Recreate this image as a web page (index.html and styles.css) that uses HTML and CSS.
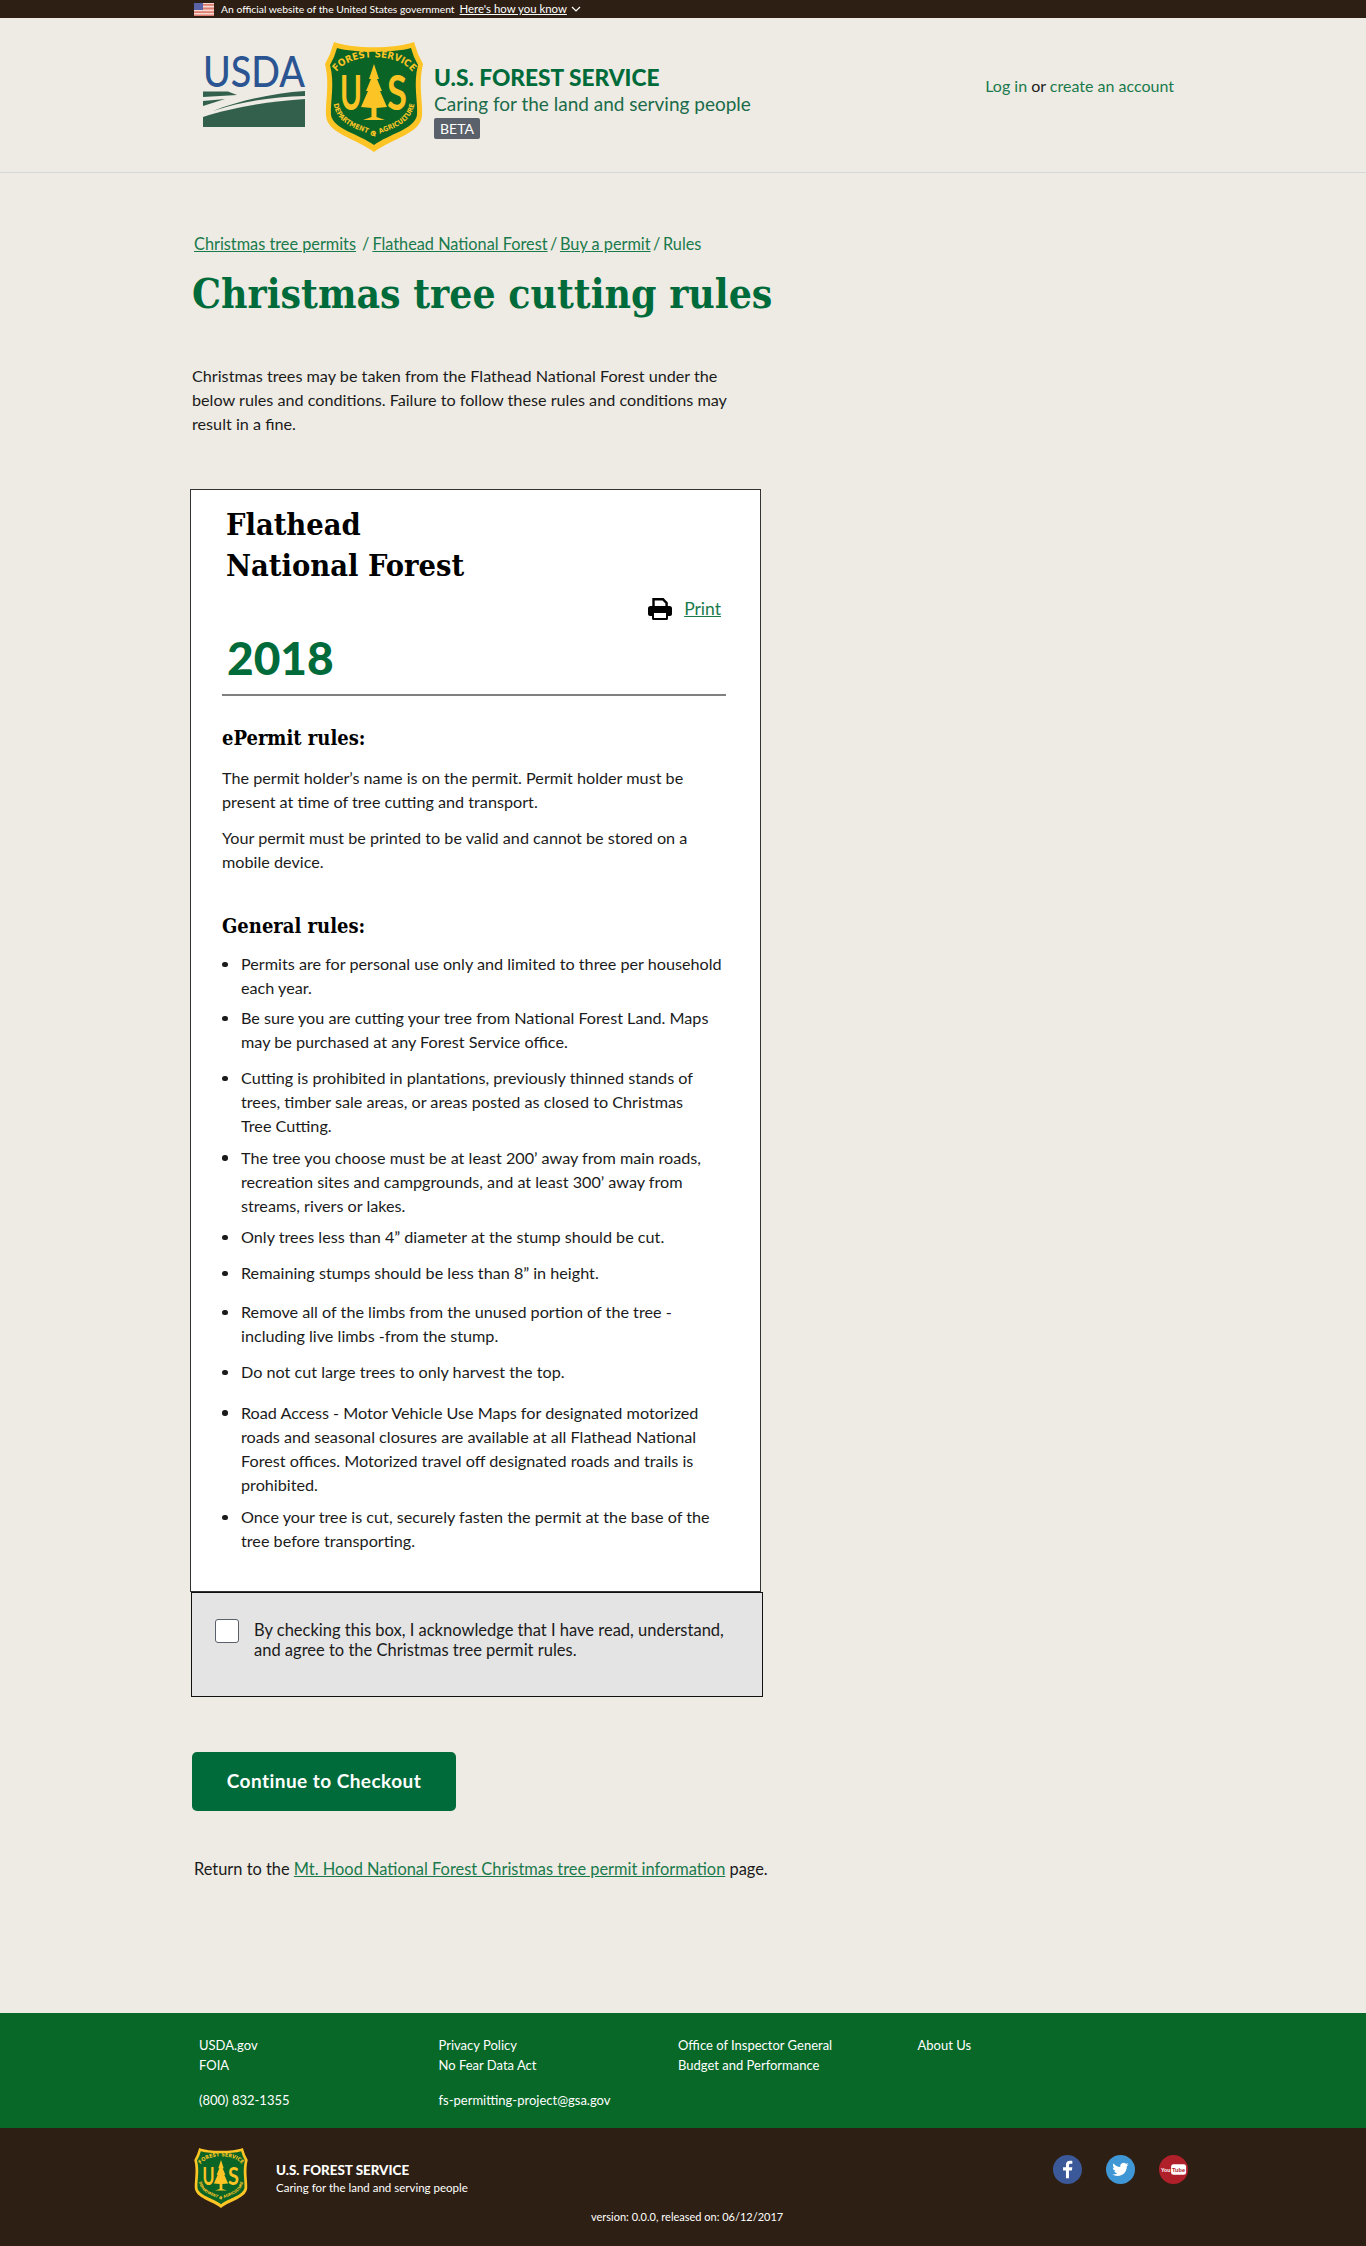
FILE: index.html
```html
<!DOCTYPE html>
<html lang="en">
<head>
    <meta charset="UTF-8">
    <meta name="viewport" content="width=device-width, initial-scale=1.0">
    <title>Christmas tree cutting rules - U.S. Forest Service</title>
    <link rel="stylesheet" href="styles.css">
</head>
<body>

    <svg class="defs" width="0" height="0" aria-hidden="true">
        <defs>
            <symbol id="shield" viewBox="0 0 98 110">
                <path d="M9 0 C28 7 70 7 89 0 L93 12 L98 22 C93 42 98 60 97 74 C95 92 68 96 49 110 C30 96 3 92 1 74 C0 60 5 42 0 22 L5 12 Z" fill="#fdc425"/>
                <path d="M12 6 C30 11 68 11 86 6 L89 15 L93 23 C88 42 93 60 92 73 C90 87 64 92 49 103 C34 92 8 87 6 73 C5 60 10 42 5 23 L9 15 Z" fill="#0a6426"/>
                <path id="arc-top" d="M11 31 C24 10 74 10 88 31" fill="none"/>
                <path id="arc-bottom" d="M8 56 C9 86 36 86 49 95 C62 86 89 86 90 56" fill="none"/>
                <text class="shield-small" fill="#fdc425"><textPath href="#arc-top" startOffset="50%" text-anchor="middle">FOREST SERVICE</textPath></text>
                <text class="shield-tiny" fill="#fdc425"><textPath href="#arc-bottom" startOffset="50%" text-anchor="middle">DEPARTMENT OF AGRICULTURE</textPath></text>
                <text class="shield-big" x="15" y="68" textLength="22" lengthAdjust="spacingAndGlyphs" fill="#fdc425">U</text>
                <text class="shield-big" x="62" y="68" textLength="20" lengthAdjust="spacingAndGlyphs" fill="#fdc425">S</text>
                <path d="M49 22 L54 37 L52 37 L57 49 L55 49 L62 65 L51.500 66 L51.500 75 L60 78 L38 78 L46.500 75 L46.500 66 L36 65 L43 49 L41 49 L46 37 L44 37 Z" fill="#fdc425"/>
            </symbol>
        </defs>
    </svg>

    <div class="gov-banner">
        <svg class="flag" viewBox="0 0 20 13" width="20" height="13">
            <rect width="20" height="13" fill="#f7d9cf"/>
            <path d="M0 1h20v1.800H0zM0 4.600h20v1.800H0zM0 8.200h20V10H0zM0 11.600h20V13H0z" fill="#dd7d72"/>
            <rect width="9" height="7" fill="#5a62a8"/>
        </svg>
        <span class="gov-text">An official website of the United States government</span>
        <a class="gov-link" href="#">Here's how you know</a>
        <svg class="chevron" viewBox="0 0 10 6" width="10" height="6"><path d="M1 1l4 4 4-4" fill="none" stroke="#fff" stroke-width="1.200"/></svg>
    </div>

    <header class="site-header">
        <div class="brand">
            <svg class="usda-logo" viewBox="0 0 102 70" width="102" height="70">
                <text class="usda-text" x="0" y="30" textLength="102" lengthAdjust="spacingAndGlyphs" fill="#2b5592">USDA</text>
                <path d="M0 34.500H25L34 38L0 40z" fill="#33604c"/>
                <path d="M102 34V39C70 40 40 44 10 54C35 44 70 36 102 34z" fill="#33604c"/>
                <path d="M0 44L22 42L0 49z" fill="#33604c"/>
                <path d="M102 42V70H0V60C30 50 70 44 102 42z" fill="#33604c"/>
            </svg>
            <svg class="shield-logo" width="98" height="110"><use href="#shield"/></svg>
            <div class="brand-text">
                <div class="brand-title">U.S. FOREST SERVICE</div>
                <div class="brand-tagline">Caring for the land and serving people</div>
                <span class="beta">BETA</span>
            </div>
        </div>
        <div class="login"><a href="#">Log in</a> or <a href="#">create an account</a></div>
    </header>

    <main class="content">
        <nav class="breadcrumbs">
            <a href="#">Christmas tree permits</a><span class="sep first">/</span><a href="#">Flathead National Forest</a><span class="sep">/</span><a href="#">Buy a permit</a><span class="sep">/</span>Rules
        </nav>

        <h1>Christmas tree cutting rules</h1>

        <p class="intro">Christmas trees may be taken from the Flathead National Forest under the below rules and conditions. Failure to follow these rules and conditions may result in a fine.</p>

        <section class="rules-card">
            <h2 class="forest-name">Flathead<br>National Forest</h2>
            <div class="print-row">
                <svg class="print-icon" viewBox="0 0 24 22" width="24" height="22">
                    <path d="M5.500 10V1.300h9.500l3.600 3.600V10" fill="none" stroke="#000" stroke-width="2.400"/>
                    <path d="M2.500 8h19A2.500 2.500 0 0 1 24 10.500V16a2 2 0 0 1-2 2h-2v2.500a1.500 1.500 0 0 1-1.500 1.500h-13A1.500 1.500 0 0 1 4 20.500V18H2a2 2 0 0 1-2-2V10.500A2.500 2.500 0 0 1 2.500 8z" fill="#000"/>
                    <rect x="6" y="15" width="12" height="5" fill="#fff"/>
                </svg>
                <a href="#">Print</a>
            </div>
            <div class="year">2018</div>

            <div class="rules-body">
                <h3>ePermit rules:</h3>
                <p>The permit holder’s name is on the permit. Permit holder must be present at time of tree cutting and transport.</p>
                <p>Your permit must be printed to be valid and cannot be stored on a mobile device.</p>

                <h3 class="general">General rules:</h3>
                <ul>
                    <li class="gap-s">Permits are for personal use only and limited to three per household each year.</li>
                    <li class="gap-m">Be sure you are cutting your tree from National Forest Land. Maps may be purchased at any Forest Service office.</li>
                    <li class="gap-7">Cutting is prohibited in plantations, previously thinned stands of trees, timber sale areas, or areas posted as closed to Christmas Tree&nbsp;Cutting.</li>
                    <li class="gap-7">The tree you choose must be at least 200’ away from main roads, recreation sites and campgrounds, and at least 300’ away from streams, rivers or lakes.</li>
                    <li class="gap-m">Only trees less than 4” diameter at the stump should be cut.</li>
                    <li class="gap-l">Remaining stumps should be less than 8” in height.</li>
                    <li class="gap-m">Remove all of the limbs from the unused portion of the tree - including live limbs -from the stump.</li>
                    <li class="gap-x">Do not cut large trees to only harvest the top.</li>
                    <li class="gap-t">Road Access - Motor Vehicle Use Maps for designated motorized roads and seasonal closures are available at all Flathead National Forest offices. Motorized travel off designated roads and trails is prohibited.</li>
                    <li>Once your tree is cut, securely fasten the permit at the base of the tree before transporting.</li>
                </ul>
            </div>
        </section>

        <div class="accept-box">
            <span class="checkbox"></span>
            <span class="accept-text">By checking this box, I acknowledge that I have read, understand, and agree to the Christmas tree permit rules.</span>
        </div>

        <button class="checkout" type="button">Continue to Checkout</button>

        <p class="return-line">Return to the <a href="#">Mt. Hood National Forest Christmas tree permit information</a> page.</p>
    </main>

    <footer>
        <div class="footer-links">
            <div class="footer-col">
                <a href="#">USDA.gov</a>
                <a href="#">FOIA</a>
                <a class="contact" href="#">(800) 832-1355</a>
            </div>
            <div class="footer-col">
                <a href="#">Privacy Policy</a>
                <a href="#">No Fear Data Act</a>
                <a class="contact" href="#">fs-permitting-project@gsa.gov</a>
            </div>
            <div class="footer-col">
                <a href="#">Office of Inspector General</a>
                <a href="#">Budget and Performance</a>
            </div>
            <div class="footer-col">
                <a href="#">About Us</a>
            </div>
        </div>
        <div class="footer-brand">
            <svg class="footer-shield" width="54" height="60"><use href="#shield"/></svg>
            <div class="footer-text">
                <div class="footer-title">U.S. FOREST SERVICE</div>
                <div class="footer-tagline">Caring for the land and serving people</div>
            </div>
            <div class="social">
                <svg viewBox="0 0 30 30" width="29" height="29">
                    <circle cx="15" cy="15" r="15" fill="#3b5998"/>
                    <path d="M16.500 24v-8h3l.5-3.300h-3.500v-2c0-1 .4-1.600 1.700-1.600H20V6.200c-.4 0-1.300-.2-2.400-.2-2.500 0-4.200 1.500-4.200 4.300v2.400h-3V16h3v8z" fill="#fff"/>
                </svg>
                <svg viewBox="0 0 30 30" width="29" height="29">
                    <circle cx="15" cy="15" r="15" fill="#3f97d5"/>
                    <path transform="translate(6.500 6.500) scale(.7)" d="M23.953 4.570a10 10 0 01-2.825.775 4.958 4.958 0 002.163-2.723c-.951.555-2.005.959-3.127 1.184a4.920 4.920 0 00-8.384 4.482C7.690 8.095 4.067 6.130 1.640 3.162a4.822 4.822 0 00-.666 2.475c0 1.710.870 3.213 2.188 4.096a4.904 4.904 0 01-2.228-.616v.060a4.923 4.923 0 003.946 4.827 4.996 4.996 0 01-2.212.085 4.936 4.936 0 004.604 3.417 9.867 9.867 0 01-6.102 2.105c-.390 0-.779-.023-1.170-.067a13.995 13.995 0 007.557 2.209c9.053 0 13.998-7.496 13.998-13.985 0-.210 0-.420-.015-.630A9.935 9.935 0 0024 4.590z" fill="#fff"/>
                </svg>
                <svg viewBox="0 0 30 30" width="29" height="29">
                    <circle cx="15" cy="15" r="15" fill="#b0202a"/>
                    <text class="yt-text" x="2" y="17.500" textLength="10" lengthAdjust="spacingAndGlyphs" fill="#fff">You</text>
                    <rect x="12.500" y="9.500" width="15.500" height="11" rx="2.500" fill="#fff"/>
                    <text class="yt-text" x="13.500" y="17.500" textLength="13.500" lengthAdjust="spacingAndGlyphs" fill="#b0202a">Tube</text>
                </svg>
            </div>
        </div>
        <div class="version">version: 0.0.0, released on: 06/12/2017</div>
    </footer>

</body>
</html>
```

FILE: styles.css
```css
/* base */
body {
    margin: 0;
    background-color: #eeebe4;
    color: #1b1b1b;
    font-family: "Lato", "Noto Sans", sans-serif;
    font-size: 16.200px;
    line-height: 24px;
}
a {
    color: #1a7a4c;
}
.defs {
    position: absolute;
}

/* shield text */
.shield-small {
    font: 700 9.800px "DejaVu Sans Condensed", "Liberation Sans", sans-serif;
}
.shield-tiny {
    font: 700 7px "DejaVu Sans Condensed", "Liberation Sans", sans-serif;
}
.shield-big {
    font: 700 47px "Lato", sans-serif;
}

/* gov banner */
.gov-banner {
    display: flex;
    align-items: center;
    height: 18px;
    padding-left: 194px;
    background-color: #2e1f14;
    color: #fff;
    font-size: 10.350px;
    line-height: 18px;
}
.flag {
    margin-right: 7px;
}
.gov-link {
    margin-left: 5px;
    color: #fff;
    font-size: 11.400px;
}
.chevron {
    margin-left: 4px;
}

/* header */
.site-header {
    display: flex;
    justify-content: space-between;
    height: 154px;
    padding: 0 192px 0 203px;
    border-bottom: 1px solid #d6d7d9;
}
.brand {
    display: flex;
    align-items: flex-start;
}
.usda-logo {
    margin-top: 39px;
    overflow: visible;
}
.usda-text {
    font: 500 42px "Lato", sans-serif;
}
.shield-logo {
    margin: 24px 0 0 20px;
}
.brand-text {
    margin: 46px 0 0 11px;
}
.brand-title {
    color: #006b3a;
    font-size: 22.700px;
    font-weight: 900;
    line-height: 28px;
}
.brand-tagline {
    color: #1b6b4a;
    font-size: 19px;
    line-height: 24px;
}
.beta {
    display: block;
    width: 46px;
    height: 21px;
    margin-top: 2px;
    border-radius: 2px;
    background-color: #5b616b;
    color: #fff;
    font-size: 14px;
    line-height: 21px;
    text-align: center;
}
.login {
    margin-top: 56px;
    font-size: 16px;
}
.login a {
    text-decoration: none;
}

/* main column */
.content {
    padding: 59px 0 0 192px;
    height: 1840px;
    box-sizing: border-box;
}
.breadcrumbs {
    padding-left: 2px;
    color: #1a7a4c;
    font-size: 16.300px;
}
.sep {
    margin: 0 2.500px;
}
.sep.first {
    margin: 0 3px 0 6px;
}
h1 {
    margin: 13px 0 0;
    color: #006b3a;
    font-family: "DejaVu Serif Condensed", "DejaVu Serif", serif;
    font-size: 40.500px;
    font-weight: 700;
    line-height: 50px;
    white-space: nowrap;
}
.intro {
    width: 540px;
    margin: 45px 0 0;
}

/* card */
.rules-card {
    width: 569px;
    height: 1101px;
    margin: 53px 0 0 -2px;
    border: 1px solid #333;
    background-color: #fff;
}
.forest-name {
    margin: 14px 0 0 35px;
    color: #000;
    font-family: "DejaVu Serif Condensed", "DejaVu Serif", serif;
    font-size: 30.500px;
    font-weight: 700;
    line-height: 41px;
}
.print-row {
    display: flex;
    align-items: center;
    justify-content: flex-end;
    gap: 12px;
    margin: 11px 39px 0 0;
    font-size: 17.500px;
}
.year {
    margin: 7px 0 0 36px;
    color: #006b3a;
    font-size: 46px;
    font-weight: 900;
    line-height: 60px;
}
.rules-body {
    margin: 6px 34px 0 31px;
    padding-top: 28px;
    border-top: 2px solid #808080;
}
.rules-body h3 {
    margin: 0 0 14px;
    color: #000;
    font-family: "DejaVu Serif Condensed", "DejaVu Serif", serif;
    font-size: 20px;
    font-weight: 700;
    line-height: 28px;
}
.rules-body h3.general {
    margin: 38px 0 12px;
}
.rules-body p {
    margin: 0 0 12px;
}
ul {
    margin: 0;
    padding-left: 19px;
    list-style: none;
}
li::before {
    content: "";
    display: inline-block;
    width: 5.500px;
    height: 5.500px;
    margin: 0 13.500px 0 -19px;
    border-radius: 50%;
    background-color: #1b1b1b;
    vertical-align: 3px;
}
li.gap-s {
    margin-bottom: 6px;
}
li.gap-7 {
    margin-bottom: 7.500px;
}
li.gap-m {
    margin-bottom: 12px;
}
li.gap-l {
    margin-bottom: 15px;
}
li.gap-x {
    margin-bottom: 16.500px;
}
li.gap-t {
    margin-bottom: 8.500px;
}

/* checkbox box */
.accept-box {
    display: flex;
    gap: 15px;
    width: 523px;
    height: 77px;
    margin-left: -1px;
    padding: 26px 24px 0 23px;
    border: 1px solid #111;
    background-color: #e4e4e4;
    font-size: 16.500px;
    line-height: 20px;
}
.checkbox {
    flex: none;
    width: 22px;
    height: 22px;
    border: 1px solid #5b616b;
    border-radius: 3px;
    background-color: #fff;
}
.accept-text {
    margin-top: 1px;
}

/* button */
.checkout {
    display: block;
    width: 264px;
    height: 59px;
    margin: 55px 0 0;
    padding: 0 0 3px;
    border: none;
    border-radius: 5px;
    background-color: #006b3a;
    color: #fff;
    font: 700 19px "Lato", sans-serif;
    letter-spacing: .45px;
}
.return-line {
    margin: 46px 0 0 2px;
    font-size: 16.400px;
}

/* footer */
footer {
    height: 233px;
    background-color: #2e1f14;
    color: #fff;
}
.footer-links {
    display: flex;
    height: 115px;
    padding-left: 199px;
    box-sizing: border-box;
    background-color: #086828;
}
.footer-col {
    display: flex;
    flex-direction: column;
    width: 239.500px;
    padding-top: 22px;
    font-size: 13px;
    line-height: 20px;
}
.footer-col a {
    color: #fff;
    text-decoration: none;
}
.footer-col .contact {
    margin-top: 15px;
}
.footer-brand {
    display: flex;
    align-items: flex-start;
    padding: 20px 178px 0 194px;
}
.footer-text {
    margin: 12px 0 0 28px;
}
.footer-title {
    font-size: 13.400px;
    font-weight: 900;
    line-height: 20px;
}
.footer-tagline {
    font-size: 11.500px;
    line-height: 16px;
}
.social {
    display: flex;
    gap: 24px;
    margin: 7px 0 0 auto;
}
.yt-text {
    font: 700 6px "Liberation Sans", sans-serif;
}
.version {
    margin-top: 1px;
    padding-left: 591px;
    font-size: 11px;
    line-height: 16px;
}
```
